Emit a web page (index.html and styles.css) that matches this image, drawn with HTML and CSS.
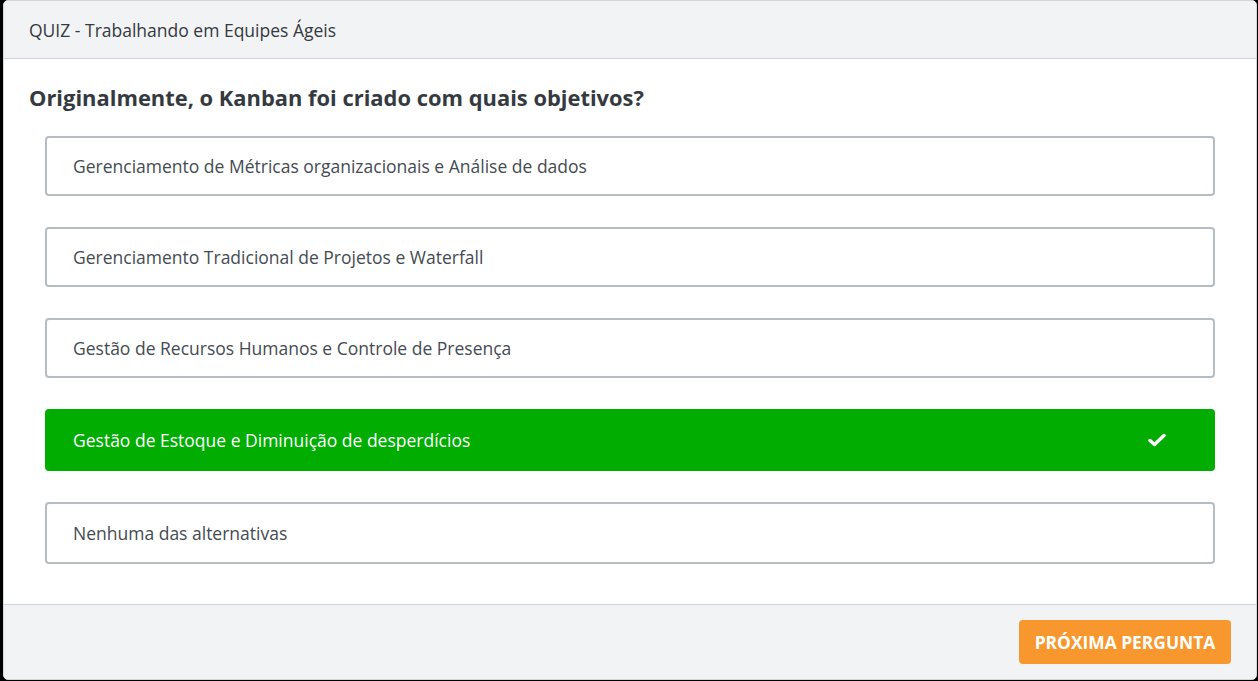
FILE: index.html
```html
<!DOCTYPE html>
<html lang="pt-BR">
<head>
<meta charset="utf-8">
<title>Quiz</title>
<link rel="stylesheet" href="styles.css">
</head>
<body>
<div class="card">
  <div class="card-header">QUIZ - Trabalhando em Equipes Ágeis</div>
  <div class="card-body">
    <h1 class="question">Originalmente, o Kanban foi criado com quais objetivos?</h1>
    <div class="options">
      <div class="option">Gerenciamento de Métricas organizacionais e Análise de dados</div>
      <div class="option">Gerenciamento Tradicional de Projetos e Waterfall</div>
      <div class="option">Gestão de Recursos Humanos e Controle de Presença</div>
      <div class="option correct">
        <span>Gestão de Estoque e Diminuição de desperdícios</span>
        <svg class="check" width="18" height="14" viewBox="0 0 18 14"><path d="M2 7.5 L6.5 11.5 L16 2.5" fill="none" stroke="#fff" stroke-width="3.4" stroke-linecap="round" stroke-linejoin="round"/></svg>
      </div>
      <div class="option">Nenhuma das alternativas</div>
    </div>
  </div>
  <div class="card-footer">
    <button class="next">PRÓXIMA PERGUNTA</button>
  </div>
</div>
</body>
</html>
```
FILE: styles.css
```css
* { box-sizing: border-box; }
html, body { margin: 0; padding: 0; }
body {
  background: #000;
  width: 1258px;
  height: 681px;
  font-family: "Open Sans", "Noto Sans", sans-serif;
  overflow: hidden;
}
.card {
  margin-left: 3px;
  width: 1254px;
  height: 680px;
  background: #fff;
  border: 1px solid #d3d6da;
  border-radius: 5px;
  display: flex;
  flex-direction: column;
  overflow: hidden;
}
.card-header {
  height: 58px;
  flex: none;
  background: #f2f3f5;
  border-bottom: 1px solid #d0d4d9;
  padding-left: 25px;
  display: flex;
  align-items: center;
  font-size: 17.5px;
  color: #343a40;
}
.card-body {
  padding: 24px 41px 40px 41px;
}
.question {
  margin: 0 0 23px -16px;
  font-size: 21.9px;
  font-weight: 700;
  color: #343a40;
  line-height: 30px;
}
.options {
  display: flex;
  flex-direction: column;
  gap: 31px;
}
.option {
  height: 60px;
  border: 2px solid #b4bcc4;
  border-radius: 4px;
  padding: 0 26px;
  display: flex;
  align-items: center;
  justify-content: space-between;
  font-size: 17.5px;
  color: #444b52;
}
.option.correct {
  height: 62px;
  border: none;
  background: #00ad00;
  color: #fff;
  padding: 0 28px;
}
.option:last-child { height: 62px; }
.check { margin-right: 21px; }
.card-footer {
  flex: 1;
  background: #f2f3f5;
  border-top: 1px solid #cfd3d8;
  display: flex;
  justify-content: flex-end;
  align-items: flex-start;
  padding: 15px 25px 0 0;
}
.next {
  width: 212px;
  height: 44px;
  background: #f8972d;
  border: none;
  border-radius: 4px;
  color: #fff;
  font-family: "Open Sans", "Noto Sans", sans-serif;
  font-weight: 700;
  font-size: 17.4px;
  padding: 0;
}
```
